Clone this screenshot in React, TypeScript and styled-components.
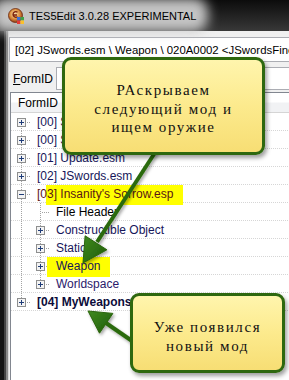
import React from "react";
import styled, { createGlobalStyle } from "styled-components";

const GlobalStyle = createGlobalStyle`
  html, body { margin: 0; padding: 0; background: #1c1c1c; overflow: hidden; }
  #root { width: 289px; height: 380px; }
`;

const Window = styled.div`
  position: relative;
  width: 289px;
  height: 380px;
  overflow: hidden;
  display: flex;
  flex-direction: column;
  background: #1c1c1c;
  font-family: "Liberation Sans", Arial, sans-serif;
  color: #000;
`;

const TitleBar = styled.div`
  flex: none;
  height: 31px;
  display: flex;
  align-items: center;
  padding-left: 8px;
  background: linear-gradient(180deg, #0c0c0c 0%, #242424 55%, #383838 100%);
`;

const TitleGroup = styled.div`
  position: relative;
  isolation: isolate;
  display: flex;
  align-items: center;
  gap: 5px;
  &::before {
    content: "";
    position: absolute;
    left: -16px;
    right: -12px;
    top: -10px;
    bottom: -8px;
    background: rgba(206, 206, 206, 0.95);
    border-radius: 14px;
    filter: blur(6px);
    z-index: -1;
  }
`;

const TitleText = styled.span`
  font-size: 11px;
  color: #000;
  white-space: nowrap;
`;

const Body = styled.div`
  flex: 1;
  display: flex;
  min-height: 0;
`;

const FrameEdge = styled.div`
  flex: none;
  width: 9px;
  background: linear-gradient(
    90deg,
    #141414 0 4px,
    #444 4px 6px,
    #8a8a8a 6px 8px,
    #d9d9d9 8px 9px
  );
`;

const Client = styled.div`
  flex: 1;
  min-width: 0;
  display: flex;
  flex-direction: column;
  background: #f0f0f0;
  padding-top: 6px;
`;

const PathEdit = styled.div`
  flex: none;
  height: 23px;
  margin-right: -40px;
  border: 1px solid #abadb3;
  background: #fff;
  display: flex;
  align-items: center;
  padding-left: 5px;
  font-size: 11.4px;
  white-space: nowrap;
  overflow: hidden;
`;

const FilterRow = styled.div`
  flex: none;
  display: flex;
  align-items: center;
  height: 23px;
  margin-top: 5px;
`;

const FilterLabel = styled.label`
  flex: none;
  width: 47px;
  box-sizing: border-box;
  padding-left: 4px;
  font-size: 12px;
  & u {
    text-decoration: underline;
  }
`;

const FilterInput = styled.div`
  flex: 1;
  height: 21px;
  margin-right: -40px;
  border: 1px solid #abadb3;
  background: #fff;
`;

const Tree = styled.div`
  flex: 1;
  margin: 2px -40px 0 1px;
  border: 1px solid #828790;
  border-bottom: none;
  background: #fff;
  display: flex;
  flex-direction: column;
`;

const TreeHeader = styled.div`
  flex: none;
  display: flex;
  align-items: center;
  padding: 1px 0 0 7px;
  box-sizing: border-box;
  border-bottom: 1px solid #d5d5d5;
  background: linear-gradient(180deg, #ffffff 0%, #ffffff 45%, #f1f2f4 55%, #f1f2f4 100%);
  font-size: 12px;
  height: 20px;
`;

const Row = styled.div`
  position: relative;
  height: 18px;
  display: flex;
  align-items: center;
  padding-left: 1px;
  background-image: linear-gradient(90deg, #d6d6d6 50%, transparent 50%);
  background-size: 2px 1px;
  background-repeat: repeat-x;
  background-position: 0 100%;
`;

type VLine = "full" | "top" | "bottom" | "none";

const Guide = styled.span<{ $v: VLine; $h: boolean }>`
  position: relative;
  flex: none;
  width: 19px;
  height: 18px;
  &::before {
    content: ${(p) => (p.$v === "none" ? "none" : '""')};
    position: absolute;
    left: 9px;
    width: 1px;
    top: ${(p) => (p.$v === "bottom" ? "9px" : "0")};
    bottom: ${(p) => (p.$v === "top" ? "9px" : "0")};
    background: repeating-linear-gradient(180deg, #a3a3a3 0 1px, transparent 1px 2px);
  }
  &::after {
    content: ${(p) => (p.$h ? '""' : "none")};
    position: absolute;
    left: 10px;
    right: 0;
    top: 9px;
    height: 1px;
    background: repeating-linear-gradient(90deg, transparent 0 1px, #a3a3a3 1px 2px);
  }
`;

const ExpanderBox = styled.svg`
  position: absolute;
  left: 5px;
  top: 5px;
  z-index: 1;
`;

const Label = styled.span<{ $color: string; $bold?: boolean; $hl?: number }>`
  position: relative;
  isolation: isolate;
  margin-left: 6px;
  font-size: 12px;
  white-space: nowrap;
  color: ${(p) => p.$color};
  font-weight: ${(p) => (p.$bold ? 700 : 400)};
  &::before {
    content: ${(p) => (p.$hl !== undefined ? '""' : "none")};
    position: absolute;
    left: ${(p) => p.$hl ?? 0}px;
    right: -10px;
    top: -2px;
    bottom: -4px;
    background: #ffff00;
    z-index: -1;
  }
`;

const Callout = styled.div<{ $x: number; $y: number; $w: number; $h: number; $lh: number; $pt: number }>`
  position: absolute;
  left: ${(p) => p.$x}px;
  top: ${(p) => p.$y}px;
  width: ${(p) => p.$w}px;
  height: ${(p) => p.$h}px;
  box-sizing: border-box;
  padding-top: ${(p) => p.$pt}px;
  border: 3px solid #2e680f;
  border-radius: 9px;
  background: linear-gradient(180deg, #fff5ad 0%, #fcea8d 50%, #f7de74 100%);
  box-shadow: 2px 3px 4px rgba(0, 0, 0, 0.38);
  display: flex;
  align-items: center;
  justify-content: center;
  text-align: center;
  font-family: "Liberation Serif", "Times New Roman", serif;
  font-size: 15px;
  letter-spacing: 1.6px;
  line-height: ${(p) => p.$lh}px;
  color: #111;
  z-index: 3;
`;

const Overlay = styled.svg`
  position: absolute;
  left: 0;
  top: 0;
  width: 289px;
  height: 380px;
  pointer-events: none;
  z-index: 2;
`;

const AppIcon = () => (
  <svg width="16" height="16" viewBox="0 0 16 16">
    <defs>
      <radialGradient id="ic" cx="45%" cy="40%" r="60%">
        <stop offset="0%" stopColor="#fbe3b4" />
        <stop offset="60%" stopColor="#d98a3a" />
        <stop offset="100%" stopColor="#8b3415" />
      </radialGradient>
    </defs>
    <circle cx="7.5" cy="7.5" r="7" fill="url(#ic)" stroke="#6b2a10" strokeWidth="0.8" />
    <path d="M9.5 4.2C8 3 5 3.8 5 6.5c0 2.4 2.6 3.4 4.6 2.2M5.4 7h3.6" stroke="#7a1f0c" strokeWidth="1.3" fill="none" />
    <rect x="9" y="9" width="3.5" height="3.5" fill="#3b6fd6" />
    <rect x="12.5" y="9" width="3.5" height="3.5" fill="#43a047" />
    <rect x="9" y="12.5" width="3.5" height="3.5" fill="#e53935" />
    <rect x="12.5" y="12.5" width="3.5" height="3.5" fill="#f9c02d" />
  </svg>
);

const Expander = ({ open }: { open: boolean }) => (
  <ExpanderBox width="9" height="9" viewBox="0 0 9 9">
    <rect x="0.5" y="0.5" width="8" height="8" fill="#f3f3f3" stroke="#8e8f8f" />
    <path d="M2 4.5h5" stroke="#1f3c78" strokeWidth="1" />
    {!open && <path d="M4.5 2v5" stroke="#1f3c78" strokeWidth="1" />}
  </ExpanderBox>
);

type GuideSpec = { v: VLine; h: boolean; exp?: "plus" | "minus" };
type RowSpec = {
  text: string;
  guides: GuideSpec[];
  color: string;
  bold?: boolean;
  hl?: number;
};

const NAVY = "#16165a";

const rows: RowSpec[] = [
  { text: "[00] Skyrim.esm", guides: [{ v: "bottom", h: true, exp: "plus" }], color: NAVY },
  { text: "[00] Skyrim.Hardcoded.dat", guides: [{ v: "full", h: true, exp: "plus" }], color: NAVY },
  { text: "[01] Update.esm", guides: [{ v: "full", h: true, exp: "plus" }], color: NAVY },
  { text: "[02] JSwords.esm", guides: [{ v: "full", h: true, exp: "plus" }], color: NAVY },
  { text: "[03] Insanity's Sorrow.esp", guides: [{ v: "full", h: true, exp: "minus" }], color: "#5a1616", hl: 9 },
  { text: "File Header", guides: [{ v: "full", h: false }, { v: "full", h: true }], color: "#000" },
  { text: "Constructible Object", guides: [{ v: "full", h: false }, { v: "full", h: true, exp: "plus" }], color: NAVY },
  { text: "Static", guides: [{ v: "full", h: false }, { v: "full", h: true, exp: "plus" }], color: NAVY },
  { text: "Weapon", guides: [{ v: "full", h: false }, { v: "full", h: true, exp: "plus" }], color: NAVY, hl: -9 },
  { text: "Worldspace", guides: [{ v: "full", h: false }, { v: "top", h: true, exp: "plus" }], color: "#2a1a6a" },
  { text: "[04] MyWeapons.esp", guides: [{ v: "top", h: true, exp: "plus" }], color: "#0c0c3a", bold: true },
];

const Arrows = () => (
  <Overlay viewBox="0 0 289 380">
    <defs>
      <filter id="sh" x="-20%" y="-20%" width="140%" height="140%">
        <feDropShadow dx="1.5" dy="2" stdDeviation="1.6" floodColor="#000" floodOpacity="0.35" />
      </filter>
      <linearGradient id="hd" x1="0" y1="0" x2="1" y2="1">
        <stop offset="0%" stopColor="#3f8a1f" />
        <stop offset="100%" stopColor="#1f5a08" />
      </linearGradient>
    </defs>
    <g filter="url(#sh)">
      <line x1="158" y1="148" x2="97" y2="242" stroke="#2c6a0e" strokeWidth="4" />
      <polygon points="83,263 106.9,249.8 85.1,235.8" fill="url(#hd)" stroke="#2a650d" strokeWidth="1" strokeLinejoin="round" />
      <line x1="135" y1="343" x2="106" y2="323" stroke="#2c6a0e" strokeWidth="4" />
      <polygon points="88,311 112.9,313.4 99.5,333.2" fill="url(#hd)" stroke="#2a650d" strokeWidth="1" strokeLinejoin="round" />
    </g>
  </Overlay>
);

export default function App() {
  return (
    <>
      <GlobalStyle />
      <Window>
        <TitleBar>
          <TitleGroup>
            <AppIcon />
            <TitleText>TES5Edit 3.0.28 EXPERIMENTAL</TitleText>
          </TitleGroup>
        </TitleBar>
        <Body>
          <FrameEdge />
          <Client>
            <PathEdit>[02] JSwords.esm \ Weapon \ 020A0002 &lt;JSwordsFineSword&gt;</PathEdit>
            <FilterRow>
              <FilterLabel>
                <u>F</u>ormID
              </FilterLabel>
              <FilterInput />
            </FilterRow>
            <Tree>
              <TreeHeader>FormID</TreeHeader>
              {rows.map((r, i) => (
                <Row key={i}>
                  {r.guides.map((g, j) => (
                    <Guide key={j} $v={g.v} $h={g.h}>
                      {g.exp && <Expander open={g.exp === "minus"} />}
                    </Guide>
                  ))}
                  <Label $color={r.color} $bold={r.bold} $hl={r.hl}>
                    {r.text}
                  </Label>
                </Row>
              ))}
            </Tree>
          </Client>
        </Body>
        <Arrows />
        <Callout $x={62} $y={57} $w={203} $h={98} $lh={18.5} $pt={6}>
          РАскрываем
          <br />
          следующий мод и
          <br />
          ищем оружие
        </Callout>
        <Callout $x={130} $y={293} $w={155} $h={80} $lh={19.5} $pt={8}>
          Уже появился
          <br />
          новый мод
        </Callout>
      </Window>
    </>
  );
}
